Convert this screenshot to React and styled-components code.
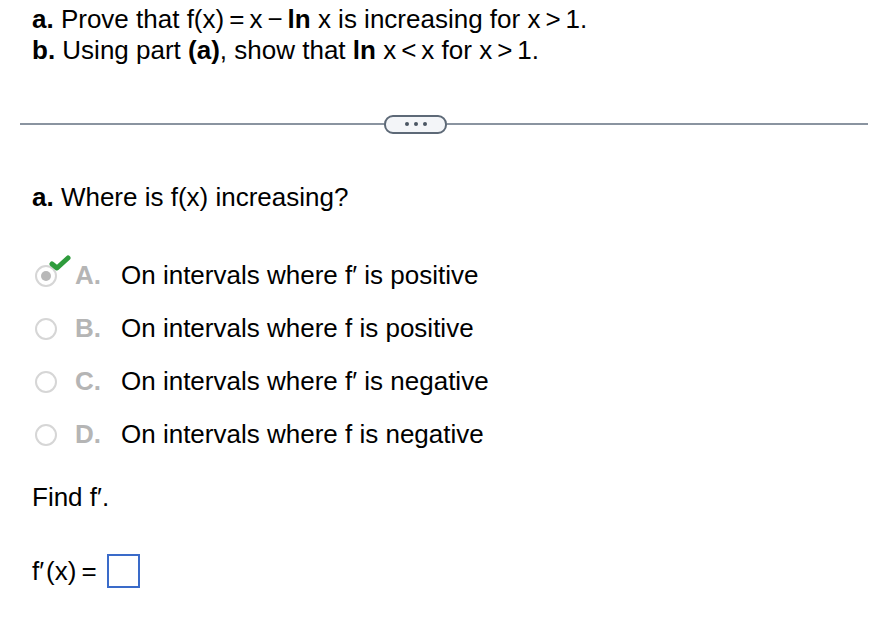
import React from "react";
import styled, { createGlobalStyle } from "styled-components";

const Global = createGlobalStyle`
  html, body { margin: 0; padding: 0; background: #fff; }
  body { font-family: "Liberation Sans", Arial, sans-serif; color: #000; }
`;

const Page = styled.div`
  width: 874px;
  height: 626px;
  overflow: hidden;
  box-sizing: border-box;
  padding-top: 4px;
`;

const Header = styled.div`
  padding-left: 32px;
  font-size: 26px;
  line-height: 31px;
  white-space: nowrap;
`;

const Line = styled.div``;

const Op = styled.span`
  margin: 0 ${(p) => p.$m ?? 5}px;
`;

const Divider = styled.div`
  display: flex;
  align-items: center;
  margin: 48px 6px 0 20px;
  height: 20px;
`;

const Rule = styled.div`
  height: 2px;
  background: #8a94a0;
  ${(p) => (p.$w ? `width: ${p.$w}px; flex: none;` : `flex: 1;`)}
`;

const Pill = styled.div`
  flex: none;
  width: 59px;
  height: 15px;
  border: 2px solid #5d6977;
  border-radius: 9px;
  background: #f3f5f8;
  display: flex;
  align-items: center;
  justify-content: center;
  gap: 5px;
`;

const Dot = styled.span`
  width: 4px;
  height: 4px;
  border-radius: 50%;
  background: #4a5563;
`;

const Body = styled.div`
  padding-left: 32px;
  font-size: 26px;
  line-height: 31px;
  white-space: nowrap;
`;

const Question = styled.div`
  margin-top: 48px;
`;

const Options = styled.div`
  margin-top: 47px;
  margin-left: 3px;
  display: flex;
  flex-direction: column;
  gap: 22px;
`;

const Option = styled.div`
  display: flex;
  align-items: center;
  height: 31px;
`;

const RadioWrap = styled.div`
  position: relative;
  width: 22px;
  height: 22px;
  flex: none;
`;

const Radio = styled.div`
  box-sizing: border-box;
  width: 22px;
  height: 22px;
  border-radius: 50%;
  border: 2px solid #d6d6d6;
  display: flex;
  align-items: center;
  justify-content: center;
  background: #fff;
`;

const RadioDot = styled.div`
  width: 10px;
  height: 10px;
  border-radius: 50%;
  background: #b8b8b8;
`;

const Check = styled.svg`
  position: absolute;
  left: 14px;
  top: -10px;
`;

const Letter = styled.span`
  width: 64px;
  padding-left: 18px;
  box-sizing: border-box;
  flex: none;
  font-weight: bold;
  color: #b5b5b5;
`;

const OptionText = styled.span``;

const Find = styled.div`
  margin-top: 32px;
`;

const Answer = styled.div`
  margin-top: 41px;
  display: flex;
  align-items: center;
`;

const Prime = styled.span`
  margin-right: 2px;
`;

const Box = styled.div`
  box-sizing: border-box;
  width: 33px;
  height: 34px;
  border: 2px solid #3a6bc9;
  margin-left: 5px;
`;

const options = [
  { l: "A.", t: "On intervals where f\u2032 is positive", sel: true },
  { l: "B.", t: "On intervals where f is positive" },
  { l: "C.", t: "On intervals where f\u2032 is negative" },
  { l: "D.", t: "On intervals where f is negative" },
];

export default function App() {
  return (
    <Page>
      <Global />
      <Header>
        <Line>
          <b>a.</b> Prove that f(x)<Op>=</Op>x<Op>&minus;</Op><b>ln</b> x is increasing for x<Op>&gt;</Op>1.
        </Line>
        <Line>
          <b>b.</b> Using part <b>(a)</b>, show that <b>ln</b> x<Op>&lt;</Op>x for x<Op>&gt;</Op>1.
        </Line>
      </Header>
      <Divider>
        <Rule $w={364} />
        <Pill>
          <Dot />
          <Dot />
          <Dot />
        </Pill>
        <Rule />
      </Divider>
      <Body>
        <Question>
          <b>a.</b> Where is f(x) increasing?
        </Question>
        <Options>
          {options.map((o) => (
            <Option key={o.l}>
              <RadioWrap>
                <Radio>{o.sel && <RadioDot />}</Radio>
                {o.sel && (
                  <Check width="22" height="18" viewBox="0 0 22 18">
                    <path
                      d="M3 9 L8 13 L19 3"
                      fill="none"
                      stroke="#2e9b3c"
                      strokeWidth="5"
                      strokeLinecap="round"
                      strokeLinejoin="round"
                    />
                  </Check>
                )}
              </RadioWrap>
              <Letter>{o.l}</Letter>
              <OptionText>{o.t}</OptionText>
            </Option>
          ))}
        </Options>
        <Find>Find f&prime;.</Find>
        <Answer>
          f<Prime>&prime;</Prime>(x)<Op>=</Op>
          <Box />
        </Answer>
      </Body>
    </Page>
  );
}
